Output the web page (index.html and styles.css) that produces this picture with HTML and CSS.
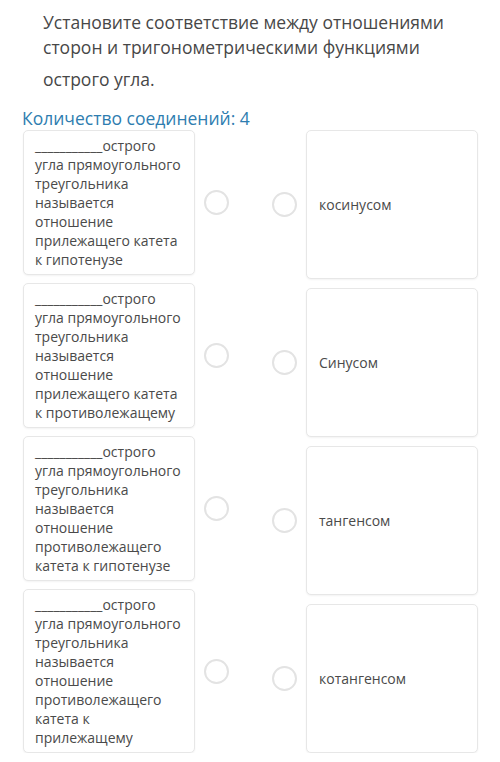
FILE: index.html
```html
<!DOCTYPE html>
<html>
<head>
    <meta charset="utf-8">
    <title>Установите соответствие</title>
    <link rel="stylesheet" href="styles.css">
</head>
<body>
    <!-- Question text -->
    <div class="question">
        <p class="question-line">Установите соответствие между отношениями сторон и тригонометрическими функциями</p>
        <p class="question-tail">острого угла.</p>
    </div>

    <div class="count">Количество соединений: 4</div>

    <!-- Matching columns -->
    <div class="match">
        <div class="match-col left-col">
            <div class="match-item">
                <div class="card left-card">___________острого угла прямоугольного треугольника называется отношение прилежащего катета к гипотенузе</div>
                <span class="dot"></span>
            </div>
            <div class="match-item">
                <div class="card left-card">___________острого угла прямоугольного треугольника называется отношение прилежащего катета к противолежащему</div>
                <span class="dot"></span>
            </div>
            <div class="match-item">
                <div class="card left-card">___________острого угла прямоугольного треугольника называется отношение противолежащего катета к гипотенузе</div>
                <span class="dot"></span>
            </div>
            <div class="match-item">
                <div class="card left-card">___________острого угла прямоугольного треугольника называется отношение противолежащего катета к прилежащему</div>
                <span class="dot"></span>
            </div>
        </div>

        <div class="match-col right-col">
            <div class="match-item">
                <span class="dot"></span>
                <div class="card right-card">косинусом</div>
            </div>
            <div class="match-item">
                <span class="dot"></span>
                <div class="card right-card">Синусом</div>
            </div>
            <div class="match-item">
                <span class="dot"></span>
                <div class="card right-card">тангенсом</div>
            </div>
            <div class="match-item">
                <span class="dot"></span>
                <div class="card right-card">котангенсом</div>
            </div>
        </div>
    </div>
</body>
</html>
```

FILE: styles.css
```css
body {
    margin: 0;
    font-family: "Open Sans", Arial, sans-serif;
    background: #fff;
    color: #4a4a4a;
}

/* Question text */
.question {
    padding: 10px 22px 0 43px;
    font-size: 17.5px;
    line-height: 25px;
    color: #474747;
}

.question p {
    margin: 0;
}

.question-tail {
    margin-top: 7px !important;
}

.count {
    margin-top: 14px;
    padding-left: 22px;
    font-size: 17.5px;
    line-height: 24px;
    color: #2e7db0;
}

/* Matching area */
.match {
    display: grid;
    grid-template-columns: 1fr 1fr;
    column-gap: 43px;
    padding: 0 22px 0 23px;
}

.match-col {
    display: flex;
    flex-direction: column;
}

.left-col {
    gap: 8px;
}

.right-col {
    gap: 9px;
}

.match-item {
    display: flex;
    align-items: center;
    gap: 9px;
}

.card {
    flex: 1;
    box-sizing: border-box;
    background: #fff;
    border: 1px solid #e7e7e7;
    border-radius: 5px;
    box-shadow: 0 1px 2px rgba(0, 0, 0, 0.05);
    font-size: 14px;
    line-height: 19px;
    color: #4a4a4a;
}

.left-card {
    padding: 5px 8px 5px 11px;
}

.right-card {
    min-height: 149px;
    display: flex;
    align-items: center;
    padding: 0 12px;
}

/* Connection dots */
.dot {
    flex: none;
    width: 25px;
    height: 25px;
    box-sizing: border-box;
    border: 2px solid #e3e3e3;
    border-radius: 50%;
}
```
